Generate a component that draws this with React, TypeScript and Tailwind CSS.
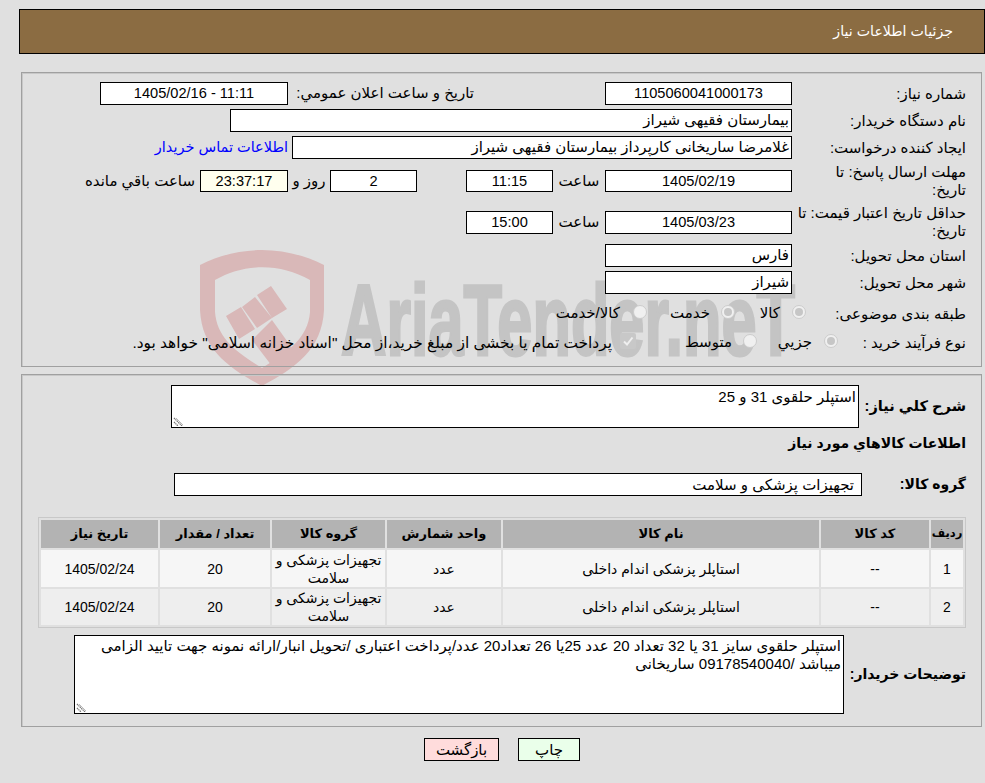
const F = "font-['Liberation_Sans','DejaVu_Sans',sans-serif]";
const NUM = "text-[14.6px] text-center";

function Box({ className = "", bg = "bg-white", children }: { className?: string; bg?: string; children?: React.ReactNode }) {
  return (
    <div className={`shrink-0 border border-black ${bg} leading-[20px] px-[2px] whitespace-nowrap overflow-hidden ${className}`}>
      {children}
    </div>
  );
}

function Label({ children, className = "w-[174px]" }: { children: React.ReactNode; className?: string }) {
  return <div className={`shrink-0 leading-[18px] text-[15px] whitespace-nowrap ${className}`}>{children}</div>;
}

function Radio({ on }: { on?: boolean }) {
  return (
    <span className="shrink-0 w-[14px] h-[14px] rounded-full border border-[#cccccc] bg-[#f0f0f0] flex items-center justify-center">
      {on && <span className="w-[8px] h-[8px] rounded-full bg-[#c6c6c6]" />}
    </span>
  );
}

function Check() {
  return (
    <span className="shrink-0 w-[16px] h-[16px] rounded-[2px] bg-[#c8c8c8] flex items-center justify-center">
      <svg width="12" height="12" viewBox="0 0 12 12">
        <path d="M2 6.5 L5 9.5 L10.5 2.5" fill="none" stroke="#efefef" strokeWidth="2" />
      </svg>
    </span>
  );
}

function Grip() {
  return (
    <svg className="absolute left-[1px] bottom-[1px]" width="11" height="11" viewBox="0 0 11 11">
      <path d="M1 3 L9 11 M1 7 L5 11" stroke="#777" strokeWidth="1.3" strokeDasharray="1.4 0.6" />
      <path d="M3 3 L10 10" stroke="#bbb" strokeWidth="1" />
    </svg>
  );
}

const th = "bg-[#b3b3b3] font-bold text-[13px] text-center h-[28px] align-middle p-0";
const thSmall = "bg-[#b3b3b3] font-bold text-[11.5px] text-center h-[28px] align-middle p-0";
const td = "text-center align-middle text-[14px] leading-[18px] p-0";

function Row({ i, bg, h }: { i: number; bg: string; h: string }) {
  return (
    <tr className={`${bg} ${h}`}>
      <td className={td}>{i}</td>
      <td className={td}>--</td>
      <td className={td}>استاپلر پزشکی اندام داخلی</td>
      <td className={td}>عدد</td>
      <td className={td}>تجهیزات پزشکی و سلامت</td>
      <td className={td}>20</td>
      <td className={td}>1405/02/24</td>
    </tr>
  );
}

const panel = "relative mr-[3px] ml-[21px] border border-[#a0a0a0] shadow-[inset_1px_1px_0_#c8c8c8] pr-[15px]";

export default function App() {
  return (
    <div dir="rtl" className={`${F} relative w-[985px] h-[783px] overflow-hidden bg-[#e0e0e0] text-black text-[15px] pt-[9px]`}>
      {/* watermark */}
      <div dir="ltr" className="absolute left-[200px] top-[250px] w-[630px] h-[140px]">
        <svg className="absolute left-0 top-0" width="125" height="138" viewBox="0 0 125 138">
          <path d="M0 15 C40 -5 84 -5 124 15 L124 60 C122 100 95 118 62 136 C29 118 2 100 0 60 Z M15 30 L15 62 C17 88 36 102 62 118 C88 102 108 88 110 62 L110 30 C80 13 45 13 15 30 Z" fill="#d9b8b8" fillRule="evenodd" />
          <path d="M26 66 L41 57 L55 79 L39 89 Z M42 57 L55 47 L72 68 L57 78 Z M57 45 L71 36 L87 59 L72 68 Z M52 90 L72 70 L97 105 L78 124 Z" fill="#d9b8b8" />
        </svg>
        <div className="absolute left-[141px] top-[20px] font-bold text-[#c4c4c4] text-[100px] leading-[100px] whitespace-nowrap origin-left scale-x-[0.63] [-webkit-text-stroke:3px_#c4c4c4]">
          AriaTender.neT
        </div>
      </div>

      {/* header */}
      <div className="relative ml-[19px] h-[45px] border border-black bg-[#8b6c42] text-white flex items-center pr-[31px] text-[14.2px]">
        جزئیات اطلاعات نیاز
      </div>

      {/* panel 1 */}
      <div className={`${panel} mt-[18px] h-[295px] pt-[9px]`}>
        <div className="flex items-center h-[23px]">
          <Label>شماره نیاز:</Label>
          <Box className={`w-[187px] h-[23px] ${NUM}`}>1105060041000173</Box>
          <div className="w-[313px] shrink-0 pr-[131px] whitespace-nowrap">تاريخ و ساعت اعلان عمومي:</div>
          <Box className={`w-[188px] h-[23px] mr-[4px] ${NUM}`}>11:11 - 1405/02/16</Box>
        </div>
        <div className="flex items-center h-[23px] mt-[4px]">
          <Label>نام دستگاه خریدار:</Label>
          <Box className="w-[562px] h-[23px]">بیمارستان فقیهی شیراز</Box>
        </div>
        <div className="flex items-center h-[23px] mt-[4px]">
          <Label>ایجاد کننده درخواست:</Label>
          <Box className="w-[500px] h-[23px]">غلامرضا ساریخانی کارپرداز بیمارستان فقیهی شیراز</Box>
          <a className="mr-[4px] text-[#0000ff] whitespace-nowrap text-[14.5px]">اطلاعات تماس خریدار</a>
        </div>
        <div className="flex items-center h-[36px] mt-[4px]">
          <Label>مهلت ارسال پاسخ: تا<br />تاریخ:</Label>
          <Box className={`w-[187px] h-[22px] ${NUM}`}>1405/02/19</Box>
          <div className="w-[52px] shrink-0 text-center">ساعت</div>
          <Box className={`w-[87px] h-[22px] ${NUM}`}>11:15</Box>
          <div className="w-[49px] shrink-0" />
          <Box className={`w-[87px] h-[22px] ${NUM}`}>2</Box>
          <div className="w-[42px] shrink-0 text-center whitespace-nowrap">روز و</div>
          <Box bg="bg-[#ffffee]" className={`w-[88px] h-[22px] ${NUM}`}>23:37:17</Box>
          <div className="mr-[5px] whitespace-nowrap">ساعت باقي مانده</div>
        </div>
        <div className="flex items-center h-[36px] mt-[5px]">
          <Label>حداقل تاریخ اعتبار قیمت: تا<br />تاریخ:</Label>
          <Box className={`w-[187px] h-[23px] ${NUM}`}>1405/03/23</Box>
          <div className="w-[52px] shrink-0 text-center">ساعت</div>
          <Box className={`w-[87px] h-[23px] ${NUM}`}>15:00</Box>
        </div>
        <div className="flex items-center h-[23px] mt-[4px]">
          <Label>استان محل تحویل:</Label>
          <Box className="w-[187px] h-[23px]">فارس</Box>
        </div>
        <div className="flex items-center h-[23px] mt-[4px]">
          <Label>شهر محل تحویل:</Label>
          <Box className="w-[187px] h-[23px]">شیراز</Box>
        </div>
        <div className="flex items-center h-[23px] mt-[8px]">
          <Label className="w-[160px]">طبقه بندی موضوعی:</Label>
          <div className="mt-[-4px]"><Radio on /></div>
          <span className="mr-[12px] w-[45px] shrink-0">کالا</span>
          <div className="mt-[-4px]"><Radio on /></div>
          <span className="mr-[11px] w-[63px] shrink-0">خدمت</span>
          <div className="mt-[-4px]"><Radio /></div>
          <span className="mr-[13px] whitespace-nowrap">کالا/خدمت</span>
        </div>
        <div className="flex items-center h-[23px] mt-[6px]">
          <Label className="w-[128px]">نوع فرآیند خرید :</Label>
          <div className="mt-[-4px]"><Radio on /></div>
          <span className="mr-[12px] w-[55px] shrink-0">جزیي</span>
          <div className="mt-[-4px]"><Radio /></div>
          <span className="mr-[11px] w-[96px] shrink-0">متوسط</span>
          <div className="mt-[-4px]"><Check /></div>
          <span className="mr-[8px] whitespace-nowrap text-[15.4px]">پرداخت تمام یا بخشی از مبلغ خرید،از محل "اسناد خزانه اسلامی" خواهد بود.</span>
        </div>
      </div>

      {/* panel 2 */}
      <div className={`${panel} mt-[7px] h-[353px] pt-[10px]`}>
        <div className="flex items-center">
          <div className="shrink-0 w-[107px] font-bold text-[14.6px] whitespace-nowrap">شرح کلي نياز:</div>
          <div className="relative shrink-0 w-[688px] h-[43px] border border-black bg-white px-[2px] py-[1px] leading-[20px]">
            استپلر حلقوی 31 و 25
            <Grip />
          </div>
        </div>
        <div className="font-bold text-[14px] mt-[3px] h-[24px] leading-[24px]">اطلاعات کالاهاي مورد نياز</div>
        <div className="flex items-center mt-[18px]">
          <div className="shrink-0 w-[104px] font-bold text-[14px] whitespace-nowrap">گروه کالا:</div>
          <div className="shrink-0 w-[688px] h-[23px] border border-black bg-white pr-[7px] leading-[21px]">تجهیزات پزشکی و سلامت</div>
        </div>
        <table className="mt-[21px] w-[927px] table-fixed border border-[#c8c8c8] border-separate border-spacing-[2px]">
          <colgroup>
            <col className="w-[32px]" />
            <col className="w-[108px]" />
            <col className="w-[316px]" />
            <col className="w-[114px]" />
            <col className="w-[113px]" />
            <col className="w-[110px]" />
            <col className="w-[117px]" />
          </colgroup>
          <thead>
            <tr>
              <th className={thSmall}>رديف</th>
              <th className={th}>کد کالا</th>
              <th className={th}>نام کالا</th>
              <th className={th}>واحد شمارش</th>
              <th className={th}>گروه کالا</th>
              <th className={th}>تعداد / مقدار</th>
              <th className={th}>تاریخ نیاز</th>
            </tr>
          </thead>
          <tbody>
            <Row i={1} bg="bg-[#f6f6f6]" h="h-[37px]" />
            <Row i={2} bg="bg-[#eeeeee]" h="h-[36px]" />
          </tbody>
        </table>
        <div className="flex items-center mt-[7px]">
          <div className="shrink-0 w-[122px] font-bold text-[14px] whitespace-nowrap">توضیحات خریدار:</div>
          <div className="relative shrink-0 w-[770px] h-[79px] border border-black bg-white px-[2px] py-[1px] leading-[18px] whitespace-nowrap">
            استپلر حلقوی سایز 31 یا 32 تعداد 20 عدد 25یا 26 تعداد20 عدد/پرداخت اعتباری /تحویل انبار/ارائه نمونه جهت تایید الزامی<br />میباشد /09178540040 ساریخانی
            <Grip />
          </div>
        </div>
      </div>

      {/* buttons */}
      <div className="flex justify-center gap-[19px] mt-[11px] pl-[19px]">
        <button className="w-[62px] h-[23px] border border-black bg-[#eaffea] leading-none">چاپ</button>
        <button className="w-[75px] h-[23px] border border-black bg-[#ffdcdc] leading-none">بازگشت</button>
      </div>
    </div>
  );
}
